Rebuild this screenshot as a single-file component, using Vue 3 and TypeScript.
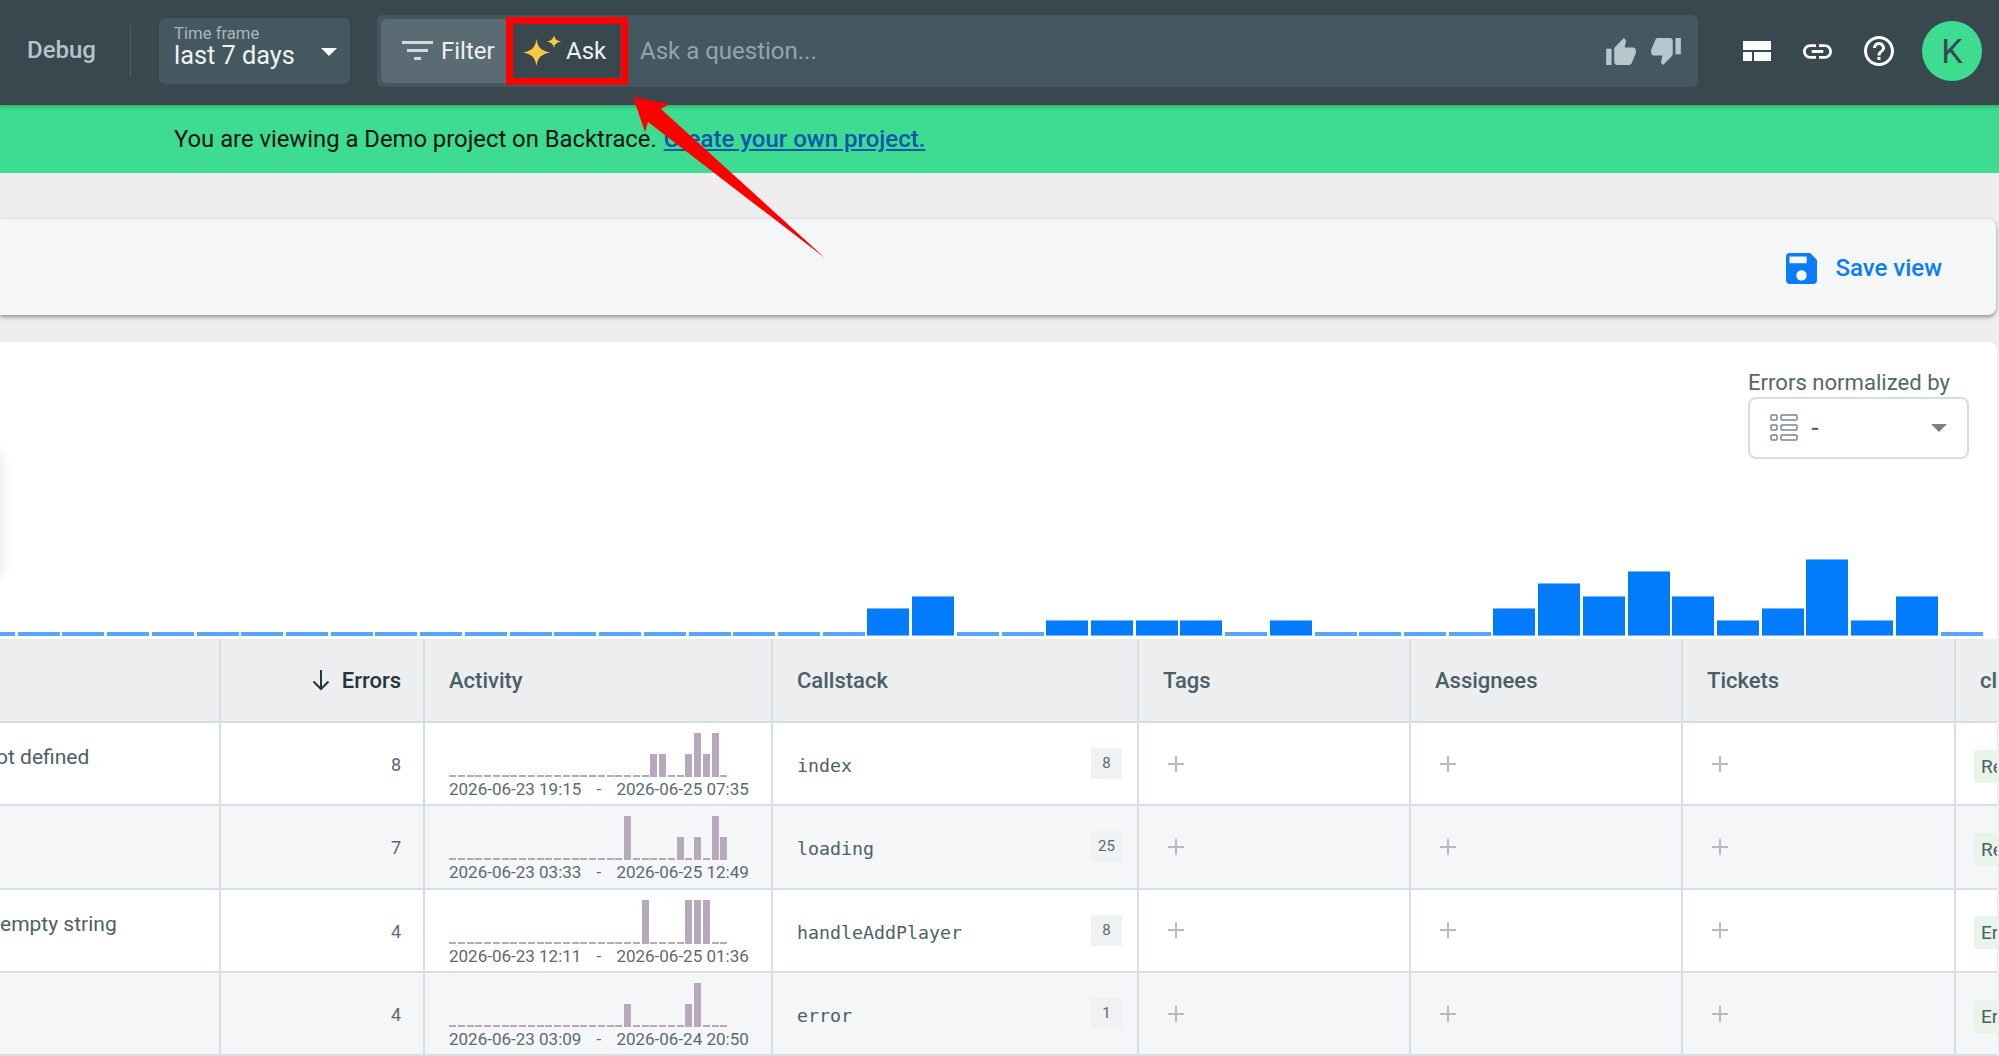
<script setup lang="ts">
interface Row {
  message: string;
  errors: number;
  from: string;
  to: string;
  callstack: string;
  frames: number;
  classifier: string;
  spark: Record<number, number>;
}

const chartLevels: number[] = [
  0, 0, 0, 0, 0, 0, 0, 0, 0, 0, 0, 0, 0, 0, 0, 0, 0, 0, 0,
  2, 3, 0, 0, 1, 1, 1, 1, 0, 1, 0, 0, 0, 0, 2, 4, 3, 5, 3, 1, 2, 6, 1, 3, 0,
];
const allBars: number[] = [0, ...chartLevels];

function barHeight(level: number): string {
  return level === 0 ? '4px' : `${Math.round(level * 12.3 + 3.5)}px`;
}

const rows: Row[] = [
  { message: 'ot defined', errors: 8, from: '2026-06-23 19:15', to: '2026-06-25 07:35', callstack: 'index', frames: 8, classifier: 'ReferenceError', spark: { 8: 2, 7: 2, 4: 2, 3: 3, 2: 2, 1: 3 } },
  { message: '', errors: 7, from: '2026-06-23 03:33', to: '2026-06-25 12:49', callstack: 'loading', frames: 25, classifier: 'ReferenceError', spark: { 11: 3, 5: 2, 3: 2, 1: 3, 0: 2 } },
  { message: 'empty string', errors: 4, from: '2026-06-23 12:11', to: '2026-06-25 01:36', callstack: 'handleAddPlayer', frames: 8, classifier: 'Error', spark: { 9: 3, 4: 3, 3: 3, 2: 3 } },
  { message: '', errors: 4, from: '2026-06-23 03:09', to: '2026-06-24 20:50', callstack: 'error', frames: 1, classifier: 'Error', spark: { 11: 2, 4: 2, 3: 3 } },
];

const slots: number[] = Array.from({ length: 32 }, (_, i) => 31 - i);
const sparkHeights: Record<number, string> = { 1: '2px', 2: '23px', 3: '44px' };
function sparkHeight(row: Row, slot: number): string {
  return sparkHeights[row.spark[slot] ?? 1];
}
</script>

<template>
  <div class="page">
    <header class="topbar">
      <span class="project">Debug</span>
      <span class="divider"></span>
      <div class="timeframe">
        <div class="tf-text">
          <span class="tf-label">Time frame</span>
          <span class="tf-value">last 7 days</span>
        </div>
        <span class="caret caret-light"></span>
      </div>
      <div class="query">
        <button class="qbtn filter">
          <svg width="31" height="20" viewBox="0 0 31 20" fill="#d3dadd">
            <rect x="0" y="0" width="31" height="3" />
            <rect x="5" y="8" width="21" height="3" />
            <rect x="12" y="16" width="7" height="3" />
          </svg>
          <span>Filter</span>
        </button>
        <button class="qbtn ask">
          <svg width="39" height="32" viewBox="0 0 39 32" fill="#fdc73f">
            <path d="M13.500 4 C15 12.500 17.500 15.500 27 17.500 C17.500 19.500 15 22.500 13.500 31 C12 22.500 9.500 19.500 0 17.500 C9.500 15.500 12 12.500 13.500 4Z" />
            <path d="M31 0 C31.800 4 33.500 5.500 38 6.500 C33.500 7.500 31.800 9 31 13 C30.200 9 28.500 7.500 24 6.500 C28.500 5.500 30.200 4 31 0Z" />
          </svg>
          <span>Ask</span>
        </button>
        <span class="placeholder">Ask a question...</span>
        <svg class="thumb" width="30" height="27" viewBox="1 1 22 20" fill="#b6c7cd">
          <path d="M1 21h4V9H1v12zm22-11c0-1.100-.9-2-2-2h-6.310l.95-4.570.03-.32c0-.41-.17-.79-.44-1.060L14.170 1 7.590 7.590C7.220 7.950 7 8.450 7 9v10c0 1.100.9 2 2 2h9c.83 0 1.540-.5 1.840-1.220l3.020-7.050c.09-.23.14-.47.14-.73v-2z" />
        </svg>
        <svg class="thumb thumb-down" width="30" height="27" viewBox="1 3 22 20" fill="#b6c7cd">
          <path d="M15 3H6c-.83 0-1.540.5-1.840 1.220l-3.020 7.050c-.09.23-.14.47-.14.73v2c0 1.100.9 2 2 2h6.310l-.95 4.570-.03.32c0 .41.17.79.44 1.060L9.830 23l6.590-6.590c.36-.36.58-.86.58-1.410V5c0-1.100-.9-2-2-2zm4 0v12h4V3h-4z" />
        </svg>
      </div>
      <div class="tools">
        <button class="tool">
          <svg width="28" height="20" viewBox="0 0 28 20" fill="#fbfcfc">
            <rect x="0" y="0" width="28" height="9" />
            <rect x="0" y="11" width="9" height="9" />
            <rect x="11" y="11" width="17" height="9" />
          </svg>
        </button>
        <button class="tool">
          <svg width="29" height="15" viewBox="2 7 20 10" fill="#fbfcfc">
            <path d="M3.900 12c0-1.710 1.390-3.100 3.100-3.100h4V7H7c-2.760 0-5 2.240-5 5s2.240 5 5 5h4v-1.900H7c-1.710 0-3.100-1.390-3.100-3.100zM8 13h8v-2H8v2zm9-6h-4v1.900h4c1.710 0 3.100 1.390 3.100 3.100s-1.390 3.100-3.100 3.100h-4V17h4c2.760 0 5-2.240 5-5s-2.240-5-5-5z" />
          </svg>
        </button>
        <button class="tool">
          <svg width="30" height="30" viewBox="2 2 20 20" fill="#fbfcfc">
            <path d="M11 18h2v-2h-2v2zm1-16C6.480 2 2 6.480 2 12s4.480 10 10 10 10-4.480 10-10S17.520 2 12 2zm0 18c-4.410 0-8-3.590-8-8s3.590-8 8-8 8 3.590 8 8-3.590 8-8 8zm0-14c-2.210 0-4 1.790-4 4h2c0-1.100.9-2 2-2s2 .9 2 2c0 2-3 1.750-3 5h2c0-2.250 3-2.500 3-5 0-2.210-1.790-4-4-4z" />
          </svg>
        </button>
      </div>
      <div class="avatar">K</div>
    </header>

    <div class="banner">
      <span class="banner-text">You are viewing a Demo project on Backtrace.</span>
      <a class="banner-link">Create your own project.</a>
    </div>

    <section class="viewbar">
      <button class="save">
        <svg width="31" height="31" viewBox="3 3 18 18" fill="#0a7cfb">
          <path d="M17 3H5c-1.110 0-2 .9-2 2v14c0 1.100.89 2 2 2h14c1.100 0 2-.9 2-2V7l-4-4zm-5 16c-1.660 0-3-1.340-3-3s1.340-3 3-3 3 1.340 3 3-1.340 3-3 3zm3-10H5V5h10v4z" />
        </svg>
        <span>Save view</span>
      </button>
    </section>

    <section class="chart">
      <div class="normalize">
        <label class="norm-label">Errors normalized by</label>
        <div class="select">
          <svg width="28" height="28" viewBox="0 0 28 28" fill="none" stroke="#78858f" stroke-width="1.500">
            <rect x="1" y="1" width="6" height="5" rx="1" />
            <rect x="11" y="1" width="16" height="5" rx="1" />
            <rect x="1" y="11" width="6" height="5" rx="1" />
            <rect x="11" y="11" width="16" height="5" rx="1" />
            <rect x="1" y="21" width="6" height="5" rx="1" />
            <rect x="11" y="21" width="16" height="5" rx="1" />
          </svg>
          <span class="select-value">-</span>
          <span class="caret caret-dark"></span>
        </div>
      </div>
      <div class="bars">
        <span
          v-for="(level, i) in allBars"
          :key="i"
          class="bar"
          :class="{ 'bar-empty': level === 0 }"
          :style="{ height: barHeight(level) }"
        ></span>
      </div>
      <span class="edge-shadow"></span>
    </section>

    <section class="table">
      <div class="cell head"></div>
      <div class="cell head head-errors">
        <svg width="20" height="22" viewBox="0 0 20 22" fill="none" stroke="#26343b" stroke-width="2">
          <path d="M10 1v19M2.500 12.500 10 20l7.500-7.500" />
        </svg>
        <span>Errors</span>
      </div>
      <div class="cell head pad">Activity</div>
      <div class="cell head pad">Callstack</div>
      <div class="cell head pad">Tags</div>
      <div class="cell head pad">Assignees</div>
      <div class="cell head pad">Tickets</div>
      <div class="cell head pad last">classifiers</div>

      <template v-for="(row, r) in rows" :key="r">
        <div class="cell message" :class="{ alt: r % 2 === 1, 'message-clipped': r === 0 }">{{ row.message }}</div>
        <div class="cell count" :class="{ alt: r % 2 === 1 }">{{ row.errors }}</div>
        <div class="cell activity" :class="{ alt: r % 2 === 1 }">
          <div class="spark">
            <span
              v-for="slot in slots"
              :key="slot"
              class="spark-bar"
              :style="{ height: sparkHeight(row, slot) }"
            ></span>
          </div>
          <div class="range">
            <span>{{ row.from }}</span>
            <span class="range-sep">-</span>
            <span>{{ row.to }}</span>
          </div>
        </div>
        <div class="cell stack" :class="{ alt: r % 2 === 1 }">
          <code class="frame">{{ row.callstack }}</code>
          <span class="frames">{{ row.frames }}</span>
        </div>
        <div v-for="c in 3" :key="c" class="cell plus-cell" :class="{ alt: r % 2 === 1 }">
          <svg width="16" height="16" viewBox="0 0 16 16" stroke="#b9bdc1" stroke-width="2">
            <path d="M8 0v16M0 8h16" />
          </svg>
        </div>
        <div class="cell class-cell last" :class="{ alt: r % 2 === 1 }">
          <span class="tag">{{ row.classifier }}</span>
        </div>
      </template>
    </section>

    <span class="ask-highlight"></span>
    <svg class="arrow" width="1999" height="1056" viewBox="0 0 1999 1056" fill="#fe0000">
      <path d="M633 97 669 104 661 109 825 258 648 122 645 132Z" />
    </svg>
  </div>
</template>

<style scoped>
.page {
  position: relative;
  width: 1999px;
  height: 1056px;
  overflow: hidden;
  background: #eeeeee;
  font-family: Roboto, "Liberation Sans", sans-serif;
}
button {
  border: 0;
  background: none;
  font: inherit;
  padding: 0;
}

.topbar {
  display: flex;
  align-items: center;
  box-sizing: border-box;
  height: 105px;
  padding-bottom: 3px;
  background: #39474f;
}
.project {
  box-sizing: border-box;
  width: 130px;
  padding-left: 27px;
  margin-bottom: 3px;
  font-size: 24px;
  font-weight: 500;
  color: #b7c3ca;
}
.divider {
  width: 1px;
  height: 52px;
  background: #4f5e66;
}
.timeframe {
  display: flex;
  align-items: center;
  justify-content: space-between;
  box-sizing: border-box;
  width: 191px;
  height: 66px;
  margin-left: 28px;
  padding: 0 13px 8px 15px;
  background: #455860;
  border-radius: 6px;
}
.tf-text {
  display: flex;
  flex-direction: column;
}
.tf-label {
  font-size: 16.700px;
  line-height: 17px;
  color: #a9b7bd;
}
.tf-value {
  font-size: 25.300px;
  line-height: 27px;
  color: #eef2f3;
}
.caret {
  width: 0;
  height: 0;
  border-left: 8.500px solid transparent;
  border-right: 8.500px solid transparent;
}
.caret-light {
  border-top: 8px solid #fbfcfc;
  margin-top: 10px;
}
.caret-dark {
  border-top: 8px solid #7c7f82;
}

.query {
  display: flex;
  align-items: center;
  box-sizing: border-box;
  width: 1321px;
  height: 72px;
  margin-left: 27px;
  padding: 4px 17px 4px 4px;
  background: #455860;
  border-radius: 6px;
}
.qbtn {
  display: flex;
  align-items: center;
  height: 64px;
  font-size: 24px;
  color: #eef2f3;
}
.filter {
  width: 126px;
  padding-left: 21px;
  gap: 8px;
  box-sizing: border-box;
  background: #5a6b73;
  border-radius: 6px 0 0 6px;
}
.ask {
  width: 113px;
  padding-left: 16px;
  gap: 4px;
  box-sizing: border-box;
  background: #39474f;
  border-radius: 0 6px 6px 0;
}
.placeholder {
  flex: 1;
  margin-left: 20px;
  font-size: 24px;
  color: #94a4ab;
}
.thumb-down {
  margin-left: 15px;
}

.tools {
  display: flex;
  margin-left: 28px;
}
.tool {
  display: flex;
  align-items: center;
  justify-content: center;
  width: 61px;
  height: 40px;
}
.avatar {
  width: 60px;
  height: 60px;
  margin-left: 13px;
  border-radius: 50%;
  background: #3ddc91;
  color: #39474f;
  font-size: 34px;
  line-height: 60px;
  text-align: center;
}

.banner {
  display: flex;
  align-items: center;
  gap: 7px;
  height: 68px;
  padding-left: 174px;
  background: #3ddc91;
  font-size: 24px;
  color: #0b1512;
  box-shadow: inset 0 5px 5px -4px rgba(0, 0, 0, 0.3);
}
.banner-text {
  font-size: 23.800px;
}
.banner-link {
  color: #0b57b0;
  font-weight: 500;
  text-decoration: underline;
}

.viewbar {
  display: flex;
  align-items: center;
  justify-content: flex-end;
  box-sizing: border-box;
  width: 1996px;
  height: 96px;
  margin-top: 46px;
  padding: 2px 54px 0 0;
  background: #f5f6f8;
  border-radius: 0 8px 8px 0;
  box-shadow: 0 2px 4px rgba(0, 0, 0, 0.4);
}
.save {
  display: flex;
  align-items: center;
  gap: 18px;
  font-size: 24px;
  font-weight: 500;
  color: #0a7cfb;
}

.chart {
  position: relative;
  display: flex;
  flex-direction: column;
  justify-content: space-between;
  box-sizing: border-box;
  width: 1997px;
  height: 297px;
  margin-top: 27px;
  padding: 27px 0 3px;
  background: #ffffff;
  border-radius: 0 8px 0 0;
  overflow: hidden;
}
.normalize {
  display: flex;
  flex-direction: column;
  align-self: flex-end;
  width: 221px;
  margin-right: 28px;
  gap: 2px;
}
.norm-label {
  font-size: 22.100px;
  line-height: 26px;
  color: #55666e;
  white-space: nowrap;
}
.select {
  display: flex;
  align-items: center;
  box-sizing: border-box;
  height: 62px;
  padding: 0 20px 0 20px;
  border: 2px solid #d6dee4;
  border-radius: 8px;
}
.select-value {
  flex: 1;
  margin-left: 13px;
  font-size: 24px;
  font-weight: 500;
  color: #5a6870;
}
.bars {
  display: flex;
  align-items: flex-end;
  gap: 2.730px;
  margin-left: -27px;
}
.bar {
  flex: 0 0 42px;
  box-sizing: border-box;
  background: #027cfb;
  border-top: 1px solid #74b6ff;
  border-bottom: 1px solid #74b6ff;
}
.bar-empty {
  background: #55a6fc;
  border: 0;
}
.edge-shadow {
  position: absolute;
  left: -14px;
  top: 110px;
  width: 14px;
  height: 125px;
  border-radius: 6px;
  box-shadow: 0 0 14px rgba(0, 0, 0, 0.12);
}

.table {
  display: grid;
  grid-template-columns: 221px 204px 348px 366px 272px 272px 273px 41px;
  grid-template-rows: 84px repeat(4, 83.330px);
  width: 1997px;
}
.cell {
  box-sizing: border-box;
  min-width: 0;
  overflow: hidden;
  background: #ffffff;
  border-right: 2px solid #d6dfe5;
  border-bottom: 2px solid #d6dfe5;
}
.alt {
  background: #f4f6f8;
}
.last {
  border-right: 0;
}
.head {
  display: flex;
  align-items: center;
  background: #eceef0;
  font-size: 22px;
  font-weight: 500;
  color: #4a5e68;
  white-space: nowrap;
}
.pad {
  padding-left: 24px;
}
.head-errors {
  justify-content: flex-end;
  gap: 11px;
  padding-right: 22px;
  color: #26343b;
}
.message {
  padding-top: 21px;
  font-size: 21px;
  line-height: 26px;
  color: #4d5f68;
  white-space: nowrap;
}
.message-clipped {
  text-indent: -4px;
}
.count {
  display: flex;
  align-items: center;
  justify-content: flex-end;
  padding: 2px 22px 0 0;
  font-size: 18px;
  color: #5a6a72;
}
.activity {
  padding: 10px 0 0 24px;
}
.spark {
  display: flex;
  align-items: flex-end;
  gap: 1.750px;
  height: 44px;
}
.spark-bar {
  flex: 0 0 7px;
  background: #b5a9bb;
}
.range {
  display: flex;
  margin-top: 2px;
  font-size: 17px;
  line-height: 20px;
  color: #5b6a72;
  white-space: nowrap;
}
.range-sep {
  width: 35px;
  text-align: center;
}
.stack {
  display: flex;
  align-items: center;
  justify-content: space-between;
  padding: 0 15px 0 24px;
}
.frame {
  margin-top: 4px;
  font-family: "DejaVu Sans Mono", monospace;
  font-size: 18.300px;
  color: #4d5f68;
}
.frames {
  width: 31px;
  height: 31px;
  background: #eff1f3;
  font-size: 15px;
  line-height: 31px;
  text-align: center;
  color: #5a6a72;
}
.plus-cell {
  display: flex;
  align-items: center;
  padding-left: 29px;
}
.class-cell {
  display: flex;
  align-items: center;
  padding-left: 18px;
}
.tag {
  flex: none;
  height: 33px;
  margin-top: 5px;
  padding: 0 7px;
  background: #e8f4ea;
  border-radius: 3px;
  font-size: 19px;
  line-height: 33px;
  color: #4d5f68;
  white-space: nowrap;
}

.ask-highlight {
  position: absolute;
  left: 506px;
  top: 17px;
  box-sizing: border-box;
  width: 122px;
  height: 68px;
  border: 7px solid #fe0000;
}
.arrow {
  position: absolute;
  left: 0;
  top: 0;
  pointer-events: none;
}
</style>
